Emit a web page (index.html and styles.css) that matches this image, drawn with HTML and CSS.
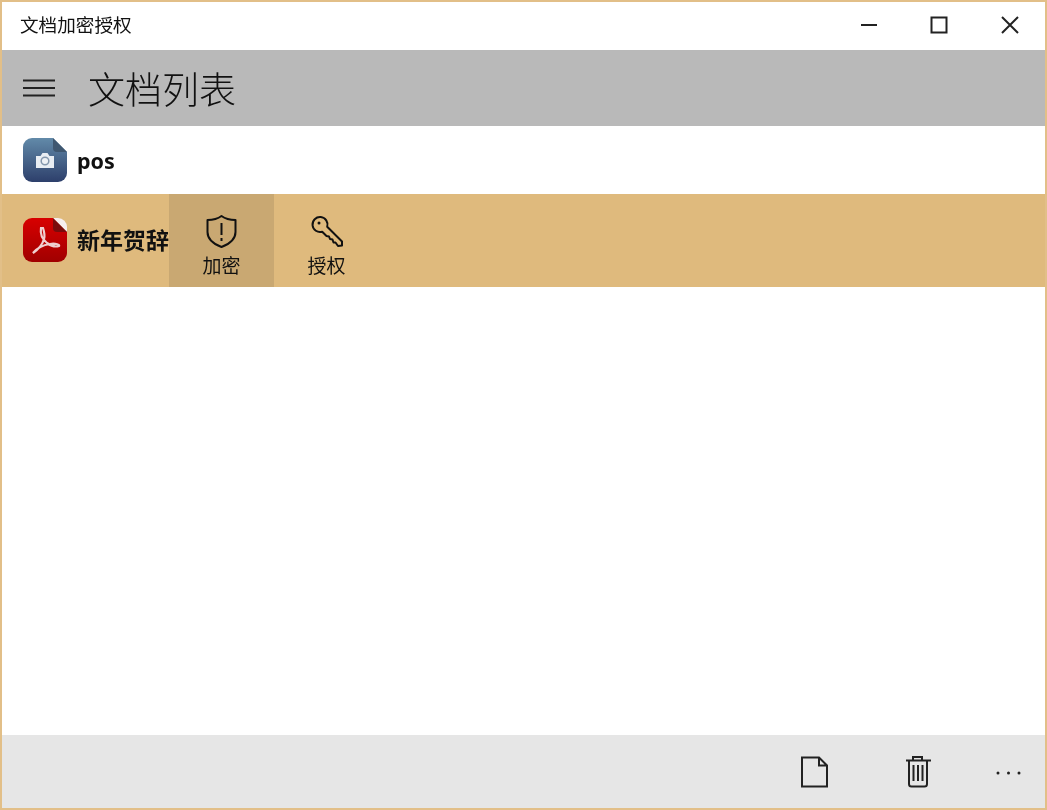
FILE: index.html
```html
<!DOCTYPE html>
<html lang="zh">
<head>
<meta charset="utf-8">
<title>文档加密授权</title>
<link rel="stylesheet" href="styles.css">
</head>
<body>
<div class="window">
  <div class="titlebar">
    <span class="app-title">文档加密授权</span>
    <div class="win-controls">
      <svg class="win-btn" viewBox="0 0 70.500 48"><path d="M27 23H43"/></svg>
      <svg class="win-btn" viewBox="0 0 70.500 48"><rect x="27.500" y="15.500" width="15" height="15"/></svg>
      <svg class="win-btn" viewBox="0 0 70.500 48"><path d="M27 15L43 31M43 15L27 31"/></svg>
    </div>
  </div>
  <header class="header">
    <svg class="hamburger" viewBox="0 0 32 18"><path d="M0 1.500H32M0 9H32M0 16.500H32"/></svg>
    <h1 class="page-title">文档列表</h1>
  </header>
  <main class="list">
    <div class="row row-plain">
      <svg class="file-icon" viewBox="0 0 44 44">
        <defs>
          <linearGradient id="blue" x1="0" y1="0" x2="0" y2="1"><stop offset="0" stop-color="#628aa9"/><stop offset="1" stop-color="#2d3f6b"/></linearGradient>
          <linearGradient id="red" x1="0" y1="0" x2="0" y2="1"><stop offset="0" stop-color="#d80000"/><stop offset="1" stop-color="#a00000"/></linearGradient>
        </defs>
        <path d="M9 0H30L44 14V35a9 9 0 0 1-9 9H9a9 9 0 0 1-9-9V9a9 9 0 0 1 9-9z" fill="url(#blue)"/>
        <path d="M30 0L44 14H34a4 4 0 0 1-4-4z" fill="#3f5770"/>
        <path d="M13 18h4.500l2-3h5l2 3H31v12H13z" fill="#e8edf3"/>
        <circle cx="22" cy="23" r="3.800" fill="#eef1f5" stroke="#8497ad" stroke-width="1.500"/>
      </svg>
      <span class="file-name">pos</span>
    </div>
    <div class="row row-selected">
      <svg class="file-icon file-icon-raised" viewBox="0 0 44 44">
        <path d="M9 0H30L44 14V35a9 9 0 0 1-9 9H9a9 9 0 0 1-9-9V9a9 9 0 0 1 9-9z" fill="url(#red)"/>
        <path d="M30 0H35a9 9 0 0 1 9 9V14z" fill="#f6eeee"/>
        <path d="M30 0L44 14H34a4 4 0 0 1-4-4z" fill="#7a0c0c"/>
        <path d="M18 10c-1 6 1 11 6 15 4 3 9 4 12 3 1-1-3-3-9-2-7 1-13 4-17 9 3-2 9-7 11-14 1-3 0-8-1-11z" fill="none" stroke="#efcfcf" stroke-width="2.200"/>
      </svg>
      <span class="file-name file-name-cjk">新年贺辞</span>
      <button class="action action-active">
        <svg class="action-icon" viewBox="0 0 32 34"><path d="M15.500 2c4 3 9 4 14 4v12c0 7-6 12-14 15C7.500 30 1.500 25 1.500 18V6c5 0 10-1 14-4z"/><path d="M15.500 9V21M15.500 24V27"/></svg>
        <span>加密</span>
      </button>
      <button class="action">
        <svg class="action-icon" viewBox="0 0 32 34"><path d="M16.200 12.700A7.500 7.500 0 1 0 11.200 17.700L15.500 22L18 22.500L19 25L21.500 25.500L22.500 28.500L24.500 28.500L27 32L31 31.500V27.500z"/><circle cx="8" cy="9" r="1.500" fill="#111" stroke="none"/></svg>
        <span>授权</span>
      </button>
    </div>
  </main>
  <footer class="toolbar">
    <svg class="tool-icon tool-file" viewBox="0 0 28 32"><path d="M2 1.500H19L27 9.500V30.500H2zM19 1.500V9.500H27"/></svg>
    <svg class="tool-icon tool-trash" viewBox="0 0 28 32"><path d="M1 4.500H26M8 4.500V1H17V4.500M4 4.500V28a2.500 2.500 0 0 0 2.500 2.500H19.500A2.500 2.500 0 0 0 22 28V4.500M8.500 9V25M13 9V25M17.500 9V25"/></svg>
    <svg class="tool-more" viewBox="0 0 28 6"><circle cx="3" cy="3" r="1.500"/><circle cx="13.500" cy="3" r="1.500"/><circle cx="24" cy="3" r="1.500"/></svg>
  </footer>
</div>
</body>
</html>
```
FILE: styles.css
```css
* { box-sizing: border-box; }
html, body { margin: 0; height: 100%; }
body { font-family: "Noto Sans CJK SC", "Noto Sans", sans-serif; }
.window {
  width: 1047px;
  height: 810px;
  border: 2px solid #e2bf88;
  display: flex;
  flex-direction: column;
  background: #fff;
  filter: blur(0.35px);
}
.titlebar {
  height: 48px;
  display: flex;
  align-items: center;
  justify-content: space-between;
  padding-left: 18px;
  flex: none;
}
.app-title { font-size: 18.600px; color: #111; margin-bottom: 5px; font-weight: 400; }
.win-controls { display: flex; }
.win-btn { width: 70.500px; height: 48px; fill: none; stroke: #222; stroke-width: 2; display: block; }
.header {
  height: 76px;
  flex: none;
  background: #b9b9b9;
  display: flex;
  align-items: center;
  padding-left: 21px;
}
.hamburger { width: 32px; height: 18px; fill: none; stroke: #222; stroke-width: 2; }
.page-title { margin: 0 0 0 33px; font-size: 37px; font-weight: 300; color: #111; line-height: 1; }
.list { flex: 1; display: flex; flex-direction: column; }
.row { display: flex; align-items: center; padding-left: 21px; }
.row-plain { height: 68px; }
.row-selected { height: 93px; background: #dfba7d; }
.file-icon { width: 44px; height: 44px; flex: none; }
.file-icon-raised { margin-bottom: 2px; }
.file-name { margin-left: 10px; font-size: 21.500px; font-weight: 700; color: #111; font-family: "Noto Sans", "Noto Sans CJK SC", sans-serif; }
.file-name-cjk { width: 92px; font-size: 23px; margin-bottom: 4px; white-space: nowrap; font-family: "Noto Sans CJK SC", sans-serif; }
.action {
  width: 105px;
  height: 93px;
  border: 0;
  background: transparent;
  padding: 20px 0 0;
  display: flex;
  flex-direction: column;
  align-items: center;
  font: inherit;
  font-size: 19px;
  font-weight: 400;
  color: #111;
  line-height: 26px;
}
.action-active { background: #c9a872; }
.action-icon { width: 32px; height: 34px; fill: none; stroke: #111; stroke-width: 2; margin-bottom: 4px; stroke-linejoin: round; }
.toolbar {
  height: 73px;
  flex: none;
  background: #e6e6e6;
  display: flex;
  align-items: center;
}
.tool-icon { width: 28px; height: 32px; fill: none; stroke: #222; stroke-width: 2; margin-top: 1px; }
.tool-file { margin-left: 798px; }
.tool-trash { margin-left: 77px; }
.tool-more { width: 28px; height: 6px; margin-left: 62px; fill: #222; margin-top: 2px; }
```
